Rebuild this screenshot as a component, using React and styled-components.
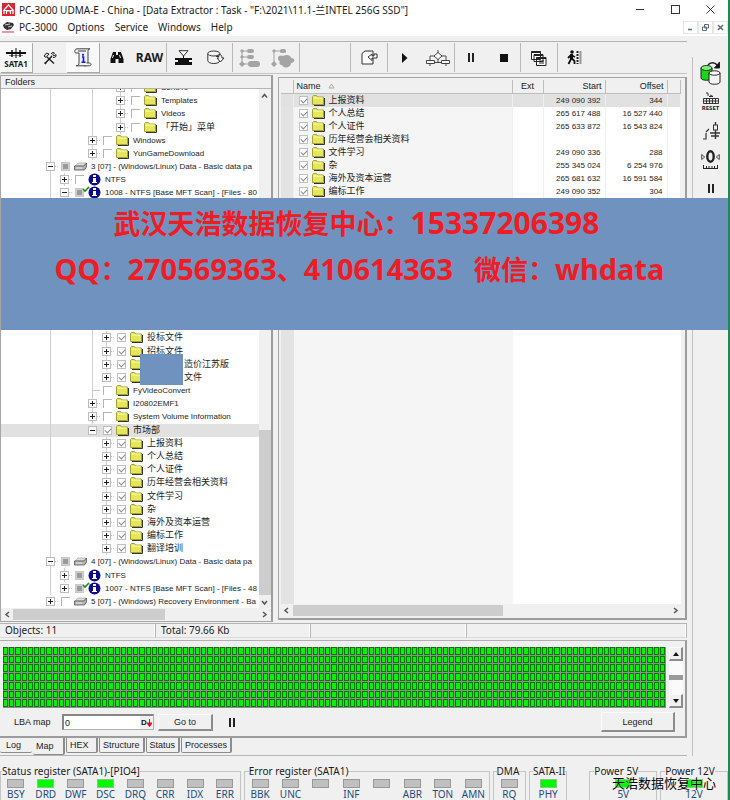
import React from 'react';
import styled, { createGlobalStyle } from 'styled-components';

const GlobalStyle = createGlobalStyle`
  * {
    box-sizing: border-box;
  }

  body {
    margin: 0;
    background: #f0f0f0;
    color: #1c1c1c;
    font-family: "Noto Sans", "Noto Sans CJK SC", sans-serif;
    font-size: 10px;
  }

  button, input {
    font: inherit;
    color: inherit;
    padding: 0;
    margin: 0;
    border: none;
    background: none;
    border-radius: 0;
  }

  ul {
    list-style: none;
    margin: 0;
    padding: 0;
  }
`

const compactFont = '"Liberation Sans", "Noto Sans CJK SC", sans-serif';

const Shell = styled.div`
  position: relative;
  border-right: 2px solid #1f8a50;
  background: #f0f0f0;
  overflow: hidden;
`

const TitleBar = styled.header`
  display: flex;
  align-items: center;
  height: 18px;
  padding-left: 2px;
  gap: 4px;
  background: #fff;
`

const TitleText = styled.h1`
  flex: 1;
  margin: 0;
  font-size: 10px;
  font-weight: 400;
  white-space: nowrap;
`

const WindowButtons = styled.div`
  display: flex;
`

const WindowButton = styled.button`
  display: flex;
  align-items: center;
  justify-content: center;
  width: 35px;
  height: 16px;
`

const MenuBar = styled.nav`
  display: flex;
  align-items: center;
  height: 18px;
  padding-left: 2px;
  background: #fff;
`

const MenuList = styled.ul`
  display: flex;
  flex: 1;
  gap: 10px;
  margin-left: 4px;
`

const ChildButton = styled.button`
  display: flex;
  align-items: center;
  justify-content: center;
  width: 15px;
  height: 13px;
  border: 1px solid #e6e6e6;
`

const Body = styled.div`
  display: flex;
`

const Main = styled.main`
  flex: 1;
  min-width: 0;
  padding-top: 5px;
`

const Toolbar = styled.div`
  display: flex;
  height: 33px;
  border-top: 1px solid #b4b4b4;
  border-bottom: 1px solid #c4c4c4;
`

const ToolGroup = styled.div`
  display: flex;
  width: ${props => props.$width}px;
  margin: 1px 0;
  border-right: 1px solid #b8b8b8;

  &:last-child {
    border-right: none;
  }
`

const ToolButton = styled.button`
  display: flex;
  flex: 1;
  flex-direction: column;
  align-items: center;
  justify-content: center;
  background: ${props => props.$raised ? '#f9f9f9' : 'none'};
  box-shadow: ${props => props.$raised ? '1px 1px 0 #a8a8a8' : 'none'};
  font-size: ${props => props.$small ? '8px' : '12px'};
  line-height: 9px;
  font-weight: 700;
`

const Panels = styled.div`
  display: flex;
  gap: 5px;
  padding-top: 1px;
`

const FolderPanel = styled.section`
  display: flex;
  flex-direction: column;
  flex: 274 1 0;
  min-width: 0;
  border: 1px solid #a6a6a6;
  border-right: 2px solid #9c9c9c;
`

const PanelTitle = styled.h2`
  margin: 0;
  height: 13px;
  padding-left: 4px;
  border-bottom: 1px solid #b4b4b4;
  font-family: ${compactFont};
  font-size: 9px;
  font-weight: 400;
  line-height: 13px;
`

const TreeArea = styled.div`
  display: flex;
  height: 519px;
`

const TreeView = styled.div`
  position: relative;
  flex: 1;
  min-width: 0;
  overflow: hidden;
  background: #fff;
`

const TreeList = styled.ul`
  display: grid;
  grid-template-rows: repeat(40, 1fr);
  height: 527px;
  margin-top: -8px;
`

const TreeItem = styled.li`
  display: flex;
  align-items: center;
  grid-row: span ${props => props.$span || 1};
  padding-left: ${props => 45 + props.$level * 14}px;
  background-color: ${props => props.$selected ? '#e1e1e1' : 'transparent'};
  background-image: ${props => props.$guides.map(() => 'linear-gradient(#cfcfcf, #cfcfcf)').join(', ')};
  background-position: ${props => props.$guides.map(level => `${49 + level * 14}px 0`).join(', ')};
  background-size: 1px 100%;
  background-repeat: no-repeat;
`

const Expander = styled.button`
  display: flex;
  flex: none;
  width: 15px;
  height: 9px;
`

const ItemLabel = styled.label`
  display: flex;
  align-items: center;
  min-width: 0;
  font-family: ${compactFont};
  font-size: ${props => props.$cjk ? '9px' : '8px'};
  line-height: 13px;
  white-space: nowrap;
`

const ItemText = styled.span`
  padding-left: ${props => props.$covered ? '41px' : '4px'};
`

const Check = styled.input`
  appearance: none;
  flex: none;
  width: 9px;
  height: 9px;
  margin-right: 4px;
  border: solid #b4b4b4;
  border-width: 1px 0 0 1px;
  background: #fff;

  &:checked {
    border-width: 1px;
    border-color: #c0c0c0;
  }

  &:checked::after {
    content: '';
    display: block;
    width: 5px;
    height: 3px;
    margin: 1px;
    border: solid #8c8c8c;
    border-width: 0 0 1px 1px;
    transform: rotate(-45deg);
  }

  &[data-partial='true'] {
    border: 1px solid #c8c8c8;
    background: #9a9a9a;
    box-shadow: inset 0 0 0 1px #d0d0d0;
  }
`

const Redaction = styled.div`
  position: absolute;
  left: 139px;
  top: 265px;
  width: 43px;
  height: 31px;
  background: #6f92bf;
`

const VScroll = styled.div`
  display: flex;
  flex-direction: column;
  align-items: center;
  justify-content: space-between;
  width: 12px;
  background: #f0f0f0;
`

const VTrack = styled.div`
  flex: 1;
  width: 100%;
  padding-top: 329px;
`

const VThumb = styled.div`
  height: 165px;
  background: #cdcdcd;
`

const HScroll = styled.div`
  display: flex;
  align-items: center;
  height: 13px;
  background: #f0f0f0;
`

const HTrack = styled.div`
  flex: 1;
  height: 11px;
`

const HThumb = styled.div`
  width: ${props => props.$size}%;
  height: 11px;
  background: #cdcdcd;
`

const ScrollButton = styled.button`
  display: flex;
  align-items: center;
  justify-content: center;
  width: 12px;
  height: 12px;
`

const ListPanel = styled.section`
  display: flex;
  flex-direction: column;
  flex: 407 1 0;
  min-width: 0;
  margin: 2px 0;
  padding: 2px 4px 1px 2px;
  border: 1px solid #a6a6a6;
  border-right: 2px solid #9c9c9c;
  border-bottom: 2px solid #9c9c9c;
`

const TableArea = styled.div`
  flex: 1;
  background: linear-gradient(to right, #e3e3e3 13px, #f5f5f5 13px, #f5f5f5 232px, #fff 232px);
`

const FileTable = styled.table`
  width: 100%;
  table-layout: fixed;
  border-spacing: 0;
  font-family: ${compactFont};
  font-size: 8px;
`

const HeadCell = styled.th`
  height: 14px;
  width: ${props => props.$width ? `${props.$width}px` : 'auto'};
  padding: 0 3px;
  border-right: 1px solid #bdbdbd;
  border-bottom: 1px solid #bdbdbd;
  background: #f0f0f0;
  font-size: 9px;
  font-weight: 400;
  line-height: 13px;
  text-align: ${props => props.$align || 'left'};
`

const FileRow = styled.tr`
  background: ${props => props.$selected ? '#e1e1e1' : 'none'};
`

const Cell = styled.td`
  height: 13px;
  padding: 0 4px 0 0;
  border-right: 1px solid #efefef;
  line-height: 13px;
  text-align: right;
  white-space: nowrap;
`

const NameCell = styled(Cell)`
  padding: 0 5px;
  text-align: left;
`

const StatusBar = styled.div`
  display: grid;
  grid-template-columns: 156px 155px 156px 1fr;
  height: 15px;
  margin-top: 1px;
`

const StatusCell = styled.div`
  padding-left: 5px;
  border-top: 1px solid #b4b4b4;
  border-right: 1px solid #b4b4b4;
  border-bottom: 1px solid #dadada;
  box-shadow: inset -1px 0 0 #fff;
  line-height: 13px;
`

const MapPanel = styled.section`
  margin-top: 2px;
  padding: 6px 2px 4px 3px;
  border-top: 1px solid #b0b0b0;
  border-right: 2px solid #9c9c9c;
  border-bottom: 2px solid #9c9c9c;
`

const MapArea = styled.div`
  display: flex;
  gap: 3px;
  height: 61px;
`

const SectorMap = styled.div`
  display: grid;
  flex: 1;
  grid-template-columns: repeat(107, 1fr);
  grid-template-rows: repeat(7, 1fr);
  background: #8b908b;
`

const Sector = styled.i`
  margin: 0 1px 1px 0;
  border: 1px solid #0c780c;
  background: #00f500;
`

const MapScroll = styled.div`
  display: flex;
  flex-direction: column;
  align-items: center;
  justify-content: space-between;
  width: 14px;
  background: #fafafa;
`

const RaisedButton = styled.button`
  display: flex;
  align-items: center;
  justify-content: center;
  width: ${props => props.$width}px;
  height: ${props => props.$height}px;
  border: solid #fafafa;
  border-width: 1px 2px 2px 1px;
  border-right-color: #8c8c8c;
  border-bottom-color: #8c8c8c;
  background: #f0f0f0;
  font-family: ${compactFont};
  font-size: 9px;
`

const MapThumb = styled.div`
  width: 100%;
  height: 5px;
  background: #9a9a9a;
`

const MapControls = styled.div`
  display: flex;
  align-items: center;
  height: 20px;
  margin-top: 4px;
  padding: 0 8px 0 11px;
  font-family: ${compactFont};
  font-size: 9px;
`

const LbaLabel = styled.label`
  width: 48px;
`

const LbaBox = styled.div`
  display: flex;
  width: 92px;
  height: 16px;
  margin-right: 4px;
  border: 1px solid #b0b0b0;
  border-top: 2px solid #858585;
  border-left: 2px solid #858585;
  background: #fff;
`

const LbaInput = styled.input`
  flex: 1;
  min-width: 0;
  padding-left: 1px;
`

const RadixButton = styled.button`
  display: flex;
  align-items: center;
  justify-content: center;
  width: 13px;
  background: #f0f0f0;
  color: #111;
  font-size: 8px;
  font-weight: 700;
  line-height: 12px;
`

const PauseButton = styled.button`
  flex: 1;
  display: flex;
  padding-left: 15px;
`

const Tabs = styled.div`
  display: flex;
  gap: 1px;
  height: 18px;
  border-bottom: 1px solid #b4b4b4;
`

const Tab = styled.button`
  height: ${props => props.$active ? '17px' : '15px'};
  min-width: 32px;
  padding: 0 3px;
  border: solid #8c8c8c;
  border-width: 0 ${props => props.$flat ? 0 : 2}px 1px ${props => props.$flat || props.$active ? 0 : 1}px;
  border-radius: 0 0 2px 2px;
  font-family: ${compactFont};
  font-size: 9px;
  text-align: left;
`

const FlatTab = styled(Tab)`
  padding-left: 6px;
`

const Rail = styled.aside`
  display: flex;
  flex-direction: column;
  align-items: center;
  width: 36px;
  margin: 21px 0 0 5px;
  padding-top: 1px;
  border-left: 1px solid #c0c0c0;
`

const RailButton = styled.button`
  display: flex;
  flex-direction: column;
  align-items: center;
  justify-content: center;
  width: 30px;
  height: 29px;
  font-size: 6px;
  font-weight: 700;
  line-height: 6px;
`

const Footer = styled.footer`
  display: flex;
  gap: 3px;
  height: 35px;
  margin-top: 9px;
`

const Register = styled.fieldset`
  flex: ${props => props.$grow} 1 0;
  min-width: 0;
  margin: 0 0 0 ${props => props.$apart ? '19px' : '0'};
  padding: 0;
  border: 1px solid #c4c4c4;
  border-bottom: none;
`

const RegisterName = styled.legend`
  margin-left: ${props => props.$inset || 1}px;
  padding: 0;
  font-size: 10px;
  line-height: 12px;
  white-space: nowrap;
`

const Leds = styled.div`
  display: grid;
  grid-template-columns: repeat(${props => props.$count}, 1fr);
`

const LedItem = styled.div`
  display: flex;
  flex-direction: column;
  align-items: center;
  padding-top: 2px;
  color: #1d4b80;
  line-height: 12px;
`

const Led = styled.span`
  width: 17px;
  height: 9px;
  border: 1px solid ${props => props.$on ? '#7fce7f' : '#989898'};
  background: ${props => props.$on ? '#00f800' : '#c0c0c0'};
`

const Banner = styled.div`
  position: absolute;
  top: 198px;
  left: 1px;
  right: 0;
  height: 132px;
  padding: 2px 16px 0 0;
  background: #6f92bf;
  color: #ee1c25;
  font-size: 27px;
  font-weight: 700;
  line-height: 45px;
  text-align: center;
  white-space: pre;
`

const BannerLine = styled.p`
  margin: 0;
  padding-left: ${props => props.$shift || 0}px;

  b {
    font-size: ${props => props.$latin}px;
    font-weight: 700;
  }
`

const Watermark = styled.div`
  position: absolute;
  right: 12px;
  bottom: 7px;
  color: #000;
  font-family: "Noto Sans CJK SC", sans-serif;
  font-size: 13px;
  line-height: 20px;
  text-shadow: 0 0 1px #fff;
`

const Icon = styled.svg`
  flex: none;
  overflow: visible;
`

const FolderIcon = () => (
  <Icon width="13" height="11" viewBox="0 0 13 11">
    <path d="M2 10.5h10.5V3" fill="none" stroke="#333" />
    <path d="M.5 9.5v-8l1-1h3l1 1.5h6v7.5z" fill="#e6e65a" stroke="#a3a33a" />
    <path d="M1.5 3h9" stroke="#ffffb0" />
  </Icon>
)

const DriveIcon = () => (
  <Icon width="13" height="9" viewBox="0 0 13 9">
    <path d="M1 4l3-3h8L10 4z" fill="#e0e0e0" stroke="#999" strokeWidth=".6" />
    <path d="M.5 4h9.5l2.5-3v4l-2 3H.5z" fill="#b5b5b5" stroke="#555" strokeWidth=".8" />
    <path d="M2 6h6" stroke="#eee" />
  </Icon>
)

const InfoIcon = ({ ticked }) => (
  <Icon width="13" height="13" viewBox="0 0 13 13">
    <circle cx="6.5" cy="6.5" r="6" fill="#0b0b8c" />
    <path d="M5 5h3v4h1v1H4V9h1V6z" fill="#fff" />
    <path d="M5 2h3v2H5z" fill="#fff" />
    {ticked && <path d="M-5 3l2 2 4-4" stroke="#1c8a1c" strokeWidth="1.6" fill="none" />}
  </Icon>
)

const ExpandIcon = ({ open }) => (
  <Icon width="15" height="9" viewBox="0 0 15 9">
    <rect x=".5" y=".5" width="8" height="8" fill="#fff" stroke="#bcbcbc" />
    <path d={open ? 'M2 4.5h5' : 'M2 4.5h5M4.5 2v5'} stroke="#222" />
    <path d="M9 4.5h4" stroke="#c4c4c4" strokeDasharray="1 1" />
  </Icon>
)

const LeafIcon = () => (
  <Icon width="15" height="9" viewBox="0 0 15 9">
    <path d="M4 4.5h8" stroke="#c4c4c4" />
  </Icon>
)

const chevrons = {
  up: 'M1 5.5l2.5-3 2.5 3',
  down: 'M1 2l2.5 3L6 2',
  left: 'M5 1L2 3.5 5 6',
  right: 'M2 1l3 2.5L2 6'
}

const Chevron = ({ dir }) => (
  <svg width="7" height="7" viewBox="0 0 7 7">
    <path d={chevrons[dir]} fill="none" stroke="#555" strokeWidth="1.5" />
  </svg>
)

const Triangle = ({ up }) => (
  <svg width="6" height="4" viewBox="0 0 6 4">
    <path d={up ? 'M0 4l3-4 3 4z' : 'M0 0l3 4 3-4z'} fill="#111" />
  </svg>
)

const PauseIcon = () => (
  <svg width="8" height="9" viewBox="0 0 8 9">
    <path d="M2 0v9M6 0v9" stroke="#222" strokeWidth="2" />
  </svg>
)

const SataIcon = () => (
  <svg width="20" height="11" viewBox="0 0 20 11">
    <path d="M0 5h20" stroke="#111" strokeWidth="2" />
    <path d="M3 7.5h14" stroke="#888" />
    <path d="M6 2v7M14 2v7" stroke="#111" strokeWidth="1.5" />
    <path d="M10 0v10" stroke="#111" />
  </svg>
)

const ToolsIcon = () => (
  <svg width="14" height="14" viewBox="0 0 14 14" fill="none" stroke="#222">
    <path d="M2 12.5L10 4M1.5 11.5l1.5 1.5" strokeWidth="1.6" />
    <path d="M4 6l7 6.5" strokeWidth="1.4" />
    <path d="M1 5l2.5-3L6 3 3 6.5zM8 3c1-2 3-1.5 3.5-1L10 3.5 11 5l2-1.5c.5 2-1 3.5-3 3" fill="#ddd" />
  </svg>
)

const ScrollIcon = () => (
  <svg width="18" height="19" viewBox="0 0 18 19">
    <path d="M3 .8h13c-2 0-2 2-2 3v11c0 2-1 3-2.5 3H2c2 0 3-1 3-3V5H2C0 5 .5 1 3 .8z" fill="#eef0f8" stroke="#444" />
    <path d="M10 17.8h5.5c2 0 2-2.8 0-2.8h-3" fill="#fff" stroke="#444" />
    <path d="M4 3h8" stroke="#777" strokeWidth="1.5" />
    <path d="M8 9h1.5v5M7.5 14.2h4" stroke="#1414e0" strokeWidth="1.6" fill="none" />
    <circle cx="9" cy="6.8" r="1.1" fill="#1414e0" />
  </svg>
)

const BinocularsIcon = () => (
  <svg width="14" height="13" viewBox="0 0 14 13">
    <path d="M3 1h3v3h2V1h3l2.5 7v4H8.5V8h-3v4H.5V8z" fill="#111" />
    <path d="M3.5 4l-1 3M9.5 4l1 3" stroke="#eee" />
  </svg>
)

const ValveIcon = () => (
  <svg width="19" height="16" viewBox="0 0 19 16">
    <path d="M5 .7h9L9.5 6z" fill="#fff" stroke="#333" />
    <path d="M9.5 6v4" stroke="#111" />
    <path d="M1 8h17v2h-3v2h3v3H1v-3h3v-2H1z" fill="#111" />
  </svg>
)

const DiskArrowIcon = () => (
  <svg width="18" height="15" viewBox="0 0 18 15" fill="#f4f4f4" stroke="#333">
    <path d="M.8 3.5v7c0 4 12 4 12 0v-7" />
    <ellipse cx="6.8" cy="3.5" rx="6" ry="2.5" />
    <path d="M9 6.5h3v-2c2 0 3 1 3 3.5h2l-3.5 4L10 8h2" />
  </svg>
)

const TreeBlocksIcon = () => (
  <svg width="21" height="20" viewBox="0 0 21 20" fill="#a4a4a4">
    <path d="M3 2v15M3 3h5M3 9h5M3 16h7" stroke="#a4a4a4" fill="none" />
    <path d="M3 1l2 2-2 2-2-2zM3 7l2 2-2 2-2-2zM3 13l3 3-3 3-3-3z" />
    <rect x="8" y="1" width="7" height="4" rx="2" />
    <rect x="8" y="7" width="7" height="4" rx="2" />
    <rect x="9" y="13" width="12" height="6" rx="3" />
  </svg>
)

const TreeCloudIcon = () => (
  <svg width="24" height="20" viewBox="0 0 24 20" fill="#a4a4a4">
    <path d="M3 2v15M3 3h7" stroke="#a4a4a4" fill="none" />
    <path d="M3 1l2 2-2 2-2-2zM3 13l3 3-3 3-3-3z" />
    <rect x="9" y="1" width="6" height="4" rx="1.5" />
    <path d="M7 10c0-3 4-3 5-2 3-2 8-1 8 2 5 0 4 5 0 5 0 5-8 6-9 2-3 0-3-3-2-4-2 0-2-2-2-3z" />
  </svg>
)

const PageArrowIcon = () => (
  <svg width="17" height="15" viewBox="0 0 17 15" fill="#fafafa" stroke="#333">
    <path d="M1 3.5L4 1h8v13H1z" />
    <path d="M16 4v4h-5v2.5L7 7l4-3v2h2V4z" />
  </svg>
)

const PlayIcon = () => (
  <svg width="6" height="10" viewBox="0 0 6 10">
    <path d="M0 0l5.5 5L0 10z" fill="#111" />
  </svg>
)

const FlowIcon = () => (
  <svg width="24" height="16" viewBox="0 0 24 16" fill="#fafafa" stroke="#444">
    <path d="M12 0v3M8 6H4v4M16 6h4v4M12 9v4" />
    <path d="M12 2.5L16 6l-4 3.5L8 6z" />
    <path d="M.5 10.5h8v3h-8zM15.5 10.5h8v3h-8zM4 14v2M20 14v2M9 12.5h6" />
  </svg>
)

const StopIcon = () => (
  <svg width="8" height="8" viewBox="0 0 8 8">
    <rect width="8" height="8" fill="#111" />
  </svg>
)

const WindowsIcon = () => (
  <svg width="16" height="16" viewBox="0 0 16 16" fill="#fff" stroke="#222">
    <path d="M.5 1.5h9v8h-9zM3 4.5h9v7H3zM5.5 7.5H15v8H5.5z" />
    <path d="M.5 2h9M3 5h9M5.5 8.2H15" strokeWidth="1.8" />
    <path d="M8 11h5M8 13h5" />
  </svg>
)

const ExitIcon = () => (
  <svg width="15" height="15" viewBox="0 0 15 15">
    <circle cx="5" cy="2" r="1.8" fill="#111" />
    <path d="M4.5 4v5" stroke="#111" strokeWidth="3" />
    <path d="M4.5 8l-3 6M4.5 8l3 3v3M1 8l3-3 4 2" stroke="#111" strokeWidth="1.8" fill="none" />
    <path d="M10.5 1v13" stroke="#222" strokeWidth="2" strokeDasharray="2 1" />
    <path d="M13.5 1v13" stroke="#999" strokeWidth="2" />
  </svg>
)

const CylindersIcon = () => (
  <svg width="21" height="24" viewBox="0 0 21 24" stroke="#222">
    <path d="M1 7v10c0 3 11 3 11 0V7" fill="#18d818" />
    <ellipse cx="6.5" cy="7" rx="5.5" ry="2.5" fill="#7af27a" />
    <path d="M9 12v9c0 3 11 3 11 0v-9" fill="#f4f4f4" />
    <ellipse cx="14.5" cy="12" rx="5.5" ry="2.2" fill="#fff" />
    <path d="M8 4c2-3 7-3 9 0" fill="none" strokeWidth="1.4" />
    <path d="M19.5 1v6h-5z" fill="#111" />
  </svg>
)

const ChipIcon = () => (
  <svg width="16" height="13" viewBox="0 0 16 13" fill="none" stroke="#333">
    <path d="M3 1h2v3M7 3l3 1.5H6" />
    <path d="M.5 6.5h15v5H.5zM.5 9h15M3.5 6v6M6.5 6v6M9.5 6v6M12.5 6v6" />
  </svg>
)

const SwitchIcon = () => (
  <svg width="18" height="18" viewBox="0 0 18 18" fill="none" stroke="#333">
    <path d="M1 17h3v-6M4 10l3-3" strokeWidth="1.2" />
    <path d="M13.5 0v3M13.5 8v9M8 11h10M9 14h8" strokeWidth="1.4" />
    <rect x="11.5" y="3" width="4" height="5" />
  </svg>
)

const ZeroIcon = () => (
  <svg width="19" height="20" viewBox="0 0 19 20" fill="none" stroke="#222">
    <ellipse cx="9.5" cy="6.5" rx="3.2" ry="5.2" strokeWidth="2.4" />
    <path d="M.7 4.5l3 2.5-3 2.5zM18.3 4.5l-3 2.5 3 2.5z" strokeWidth=".8" />
    <path d="M2 18.5h15M2.5 18v-3M5.5 18v-2M8 18v-2M11 18v-2M13.5 18v-2M16.5 18v-3" />
  </svg>
)

const AppIcon = () => (
  <svg width="13" height="13" viewBox="0 0 13 13">
    <rect width="13" height="13" fill="#dc2430" />
    <path d="M2 11V7l4.5-5L11 7v4M4.5 11V8h4v3M1 7.5h11" stroke="#fff" strokeWidth="1.2" fill="none" />
  </svg>
)

const MenuIcon = () => (
  <svg width="13" height="12" viewBox="0 0 13 12">
    <path d="M1 4l4-3 6 1 1 2-3 4-4 1-3-2z" fill="#333" />
    <path d="M3 4l5-1M6 6l4-1" stroke="#ccc" />
    <path d="M0 11h12" stroke="#e03040" />
  </svg>
)

const RadixArrow = () => (
  <svg width="5" height="8" viewBox="0 0 5 8">
    <path d="M2.5 0v7M0 4h5L2.5 7.5z" fill="#e01010" stroke="#e01010" />
  </svg>
)

const toolGroups = [
  { width: 33, tools: [{ name: 'SATA1', icon: <SataIcon />, text: 'SATA1', raised: true, small: true }] },
  { width: 67, tools: [{ name: 'Utilities', icon: <ToolsIcon /> }, { name: 'Task info', icon: <ScrollIcon />, raised: true }] },
  { width: 67, tools: [{ name: 'Find', icon: <BinocularsIcon /> }, { name: 'Raw', text: 'RAW' }] },
  { width: 66, tools: [{ name: 'Filter', icon: <ValveIcon /> }, { name: 'Save disk', icon: <DiskArrowIcon /> }] },
  { width: 67, tools: [{ name: 'Tree', icon: <TreeBlocksIcon /> }, { name: 'Group', icon: <TreeCloudIcon /> }] },
  { width: 51, tools: [] },
  { width: 37, tools: [{ name: 'Export', icon: <PageArrowIcon /> }] },
  { width: 67, tools: [{ name: 'Start', icon: <PlayIcon /> }, { name: 'Flow', icon: <FlowIcon /> }] },
  { width: 66, tools: [{ name: 'Pause', icon: <PauseIcon /> }, { name: 'Stop', icon: <StopIcon /> }] },
  { width: 37, tools: [{ name: 'Cascade', icon: <WindowsIcon /> }] },
  { width: 33, tools: [{ name: 'Exit', icon: <ExitIcon /> }] }
]

const deep = [0, 3, 5];
const partition = '[Base MFT Scan] - [Files - '

const treeItems = [
  { text: 'SendTo', level: 5, guides: deep },
  { text: 'Templates', level: 5, guides: deep },
  { text: 'Videos', level: 5, guides: deep },
  { text: '「开始」菜单', level: 5, guides: deep, cjk: true },
  { text: 'Windows', level: 3, guides: [0, 3] },
  { text: 'YunGameDownload', level: 3, guides: [0, 3] },
  { text: '3 [07] - (Windows/Linux) Data - Basic data pa', level: 0, guides: [0], kind: 'drive', open: true, partial: true },
  { text: 'NTFS', level: 1, guides: [0, 1], kind: 'info' },
  { text: `1008 - NTFS ${partition}80`, level: 1, guides: [0], kind: 'ticked', open: true, partial: true },
  { span: 10, level: 0, guides: [0, 3] },
  { text: '投标文件', level: 4, guides: [0, 3, 4], checked: true, cjk: true },
  { text: '招标文件', level: 4, guides: [0, 3, 4], checked: true, cjk: true },
  { text: '造价江苏版', level: 4, guides: [0, 3, 4], checked: true, cjk: true, covered: true },
  { text: '文件', level: 4, guides: [0, 3], checked: true, cjk: true, covered: true },
  { text: 'FyVideoConvert', level: 3, guides: [0, 3], leaf: true },
  { text: 'I20802EMF1', level: 3, guides: [0, 3] },
  { text: 'System Volume Information', level: 3, guides: [0, 3] },
  { text: '市场部', level: 3, guides: [0], checked: true, cjk: true, open: true, selected: true },
  ...['上报资料', '个人总结', '个人证件', '历年经营会相关资料', '文件学习', '杂', '海外及资本运营', '编标工作', '翻译培训']
    .map(text => ({ text, level: 4, guides: [0, 4], checked: true, cjk: true })),
  { text: '4 [07] - (Windows/Linux) Data - Basic data pa', level: 0, guides: [0], kind: 'drive', open: true, partial: true },
  { text: 'NTFS', level: 1, guides: [0, 1], kind: 'info', partial: true },
  { text: `1007 - NTFS ${partition}48`, level: 1, guides: [0], kind: 'ticked', partial: true },
  { text: '5 [07] - (Windows) Recovery Environment - Ba', level: 0, guides: [], kind: 'drive' }
]

const files = [
  ['上报资料', '249 090 392', '344'],
  ['个人总结', '265 617 488', '16 527 440'],
  ['个人证件', '265 633 872', '16 543 824'],
  ['历年经营会相关资料', '', ''],
  ['文件学习', '249 090 336', '288'],
  ['杂', '255 345 024', '6 254 976'],
  ['海外及资本运营', '265 681 632', '16 591 584'],
  ['编标工作', '249 090 352', '304']
]

const registers = [
  { name: 'Status register (SATA1)-[PIO4]', grow: 243, bits: ['BSY', 'DRD', 'DWF', 'DSC', 'DRQ', 'CRR', 'IDX', 'ERR'], on: [1, 3] },
  { name: 'Error register (SATA1)', grow: 248, bits: ['BBK', 'UNC', '', 'INF', '', 'ABR', 'TON', 'AMN'], on: [], inset: 4 },
  { name: 'DMA', grow: 32, bits: ['RQ'], on: [], inset: 3 },
  { name: 'SATA-II', grow: 37, bits: ['PHY'], on: [0], inset: 3 },
  { name: 'Power 5V', grow: 67, bits: ['5V'], on: [0], inset: 4, apart: true },
  { name: 'Power 12V', grow: 67, bits: ['12V'], on: [0], inset: 4 }
]

const itemIcons = {
  drive: <DriveIcon />,
  info: <InfoIcon />,
  ticked: <InfoIcon ticked />
}

const TreeRow = ({ item }) => (
  <TreeItem $level={item.level} $guides={item.guides} $span={item.span} $selected={item.selected}>
    {item.text && (
      <>
        <Expander aria-label="Toggle">{item.leaf ? <LeafIcon /> : <ExpandIcon open={item.open} />}</Expander>
        <ItemLabel $cjk={item.cjk}>
          <Check type="checkbox" defaultChecked={item.checked} data-partial={item.partial} />
          {itemIcons[item.kind] || <FolderIcon />}
          <ItemText $covered={item.covered}>{item.text}</ItemText>
        </ItemLabel>
      </>
    )}
  </TreeItem>
)

const HorizontalScroll = ({ size }) => (
  <HScroll>
    <ScrollButton aria-label="Scroll left"><Chevron dir="left" /></ScrollButton>
    <HTrack><HThumb $size={size} /></HTrack>
    <ScrollButton aria-label="Scroll right"><Chevron dir="right" /></ScrollButton>
  </HScroll>
)

const Folders = () => (
  <FolderPanel>
    <PanelTitle>Folders</PanelTitle>
    <TreeArea>
      <TreeView>
        <TreeList>
          {treeItems.map((item, i) => <TreeRow key={i} item={item} />)}
        </TreeList>
        <Redaction />
      </TreeView>
      <VScroll>
        <ScrollButton aria-label="Scroll up"><Chevron dir="up" /></ScrollButton>
        <VTrack><VThumb /></VTrack>
        <ScrollButton aria-label="Scroll down"><Chevron dir="down" /></ScrollButton>
      </VScroll>
    </TreeArea>
    <HorizontalScroll size={62} />
  </FolderPanel>
)

const FileList = () => (
  <ListPanel>
    <TableArea>
      <FileTable>
        <thead>
          <tr>
            <HeadCell $width={13} />
            <HeadCell $width={219}>
              Name <svg width="20" height="6" viewBox="0 0 20 6"><path d="M6 5l2.5-4L11 5z" fill="none" stroke="#aaa" /></svg>
            </HeadCell>
            <HeadCell $width={31} $align="center">Ext</HeadCell>
            <HeadCell $width={62} $align="right">Start</HeadCell>
            <HeadCell $width={62} $align="right">Offset</HeadCell>
            <HeadCell />
          </tr>
        </thead>
        <tbody>
          {files.map(([name, start, offset], i) => (
            <FileRow key={name} $selected={i === 0}>
              <Cell />
              <NameCell>
                <ItemLabel $cjk>
                  <Check type="checkbox" defaultChecked />
                  <FolderIcon />
                  <ItemText>{name}</ItemText>
                </ItemLabel>
              </NameCell>
              <Cell />
              <Cell>{start}</Cell>
              <Cell>{offset}</Cell>
              <Cell />
            </FileRow>
          ))}
        </tbody>
      </FileTable>
    </TableArea>
    <HorizontalScroll size={56} />
  </ListPanel>
)

const LbaMap = () => (
  <MapPanel>
    <MapArea>
      <SectorMap>
        {Array.from({ length: 749 }, (_, i) => <Sector key={i} />)}
      </SectorMap>
      <MapScroll>
        <RaisedButton $width={14} $height={14} aria-label="Map up"><Triangle up /></RaisedButton>
        <MapThumb />
        <RaisedButton $width={14} $height={14} aria-label="Map down"><Triangle /></RaisedButton>
      </MapScroll>
    </MapArea>
    <MapControls>
      <LbaLabel htmlFor="lba">LBA map</LbaLabel>
      <LbaBox>
        <LbaInput id="lba" type="text" defaultValue="0" />
        <RadixButton>D<RadixArrow /></RadixButton>
      </LbaBox>
      <RaisedButton $width={55} $height={17}>Go to</RaisedButton>
      <PauseButton aria-label="Pause map"><PauseIcon /></PauseButton>
      <RaisedButton $width={74} $height={20}>Legend</RaisedButton>
    </MapControls>
  </MapPanel>
)

const App = () => {
  return (
    <>
      <GlobalStyle />
      <Shell>
        <TitleBar>
          <AppIcon />
          <TitleText>PC-3000 UDMA-E - China - [Data Extractor : Task - "F:\2021\11.1-兰INTEL 256G SSD"]</TitleText>
          <WindowButtons>
            <WindowButton aria-label="Minimize"><svg width="9" height="9"><path d="M0 4.5h8" stroke="#333" /></svg></WindowButton>
            <WindowButton aria-label="Maximize"><svg width="9" height="9"><rect x=".5" y=".5" width="8" height="8" fill="none" stroke="#333" /></svg></WindowButton>
            <WindowButton aria-label="Close"><svg width="9" height="9"><path d="M.5.5l8 8M8.5.5l-8 8" stroke="#333" /></svg></WindowButton>
          </WindowButtons>
        </TitleBar>
        <MenuBar>
          <MenuIcon />
          <MenuList>
            {['PC-3000', 'Options', 'Service', 'Windows', 'Help'].map(name => (
              <li key={name}><button>{name}</button></li>
            ))}
          </MenuList>
          <ChildButton aria-label="Minimize child"><svg width="7" height="7"><path d="M1 5.5h4" stroke="#5a6b80" strokeWidth="1.5" /></svg></ChildButton>
          <ChildButton aria-label="Restore child"><svg width="7" height="7" fill="#fff" stroke="#5a6b80"><path d="M2.5.5h4V4h-4zM.5 3h4v3.5h-4z" /></svg></ChildButton>
          <ChildButton aria-label="Close child"><svg width="7" height="7"><path d="M1 1l5 5M6 1L1 6" stroke="#5a6b80" strokeWidth="1.5" /></svg></ChildButton>
        </MenuBar>
        <Body>
          <Main>
            <Toolbar>
              {toolGroups.map((group, i) => (
                <ToolGroup key={i} $width={group.width}>
                  {group.tools.map(tool => (
                    <ToolButton key={tool.name} aria-label={tool.name} $raised={tool.raised} $small={tool.small}>
                      {tool.icon}
                      {tool.text}
                    </ToolButton>
                  ))}
                </ToolGroup>
              ))}
            </Toolbar>
            <Panels>
              <Folders />
              <FileList />
            </Panels>
            <StatusBar>
              <StatusCell>Objects: 11</StatusCell>
              <StatusCell>Total: 79.66 Kb</StatusCell>
              <StatusCell />
              <StatusCell />
            </StatusBar>
            <LbaMap />
            <Tabs>
              <FlatTab $flat>Log</FlatTab>
              <Tab $active>Map</Tab>
              <Tab>HEX</Tab>
              <Tab>Structure</Tab>
              <Tab>Status</Tab>
              <Tab>Processes</Tab>
            </Tabs>
          </Main>
          <Rail>
            <RailButton aria-label="Copy disk"><CylindersIcon /></RailButton>
            <RailButton aria-label="Reset"><ChipIcon />RESET</RailButton>
            <RailButton aria-label="Power switch"><SwitchIcon /></RailButton>
            <RailButton aria-label="Recalibrate"><ZeroIcon /></RailButton>
            <RailButton aria-label="Pause drive"><PauseIcon /></RailButton>
          </Rail>
        </Body>
        <Footer>
          {registers.map(reg => (
            <Register key={reg.name} $grow={reg.grow} $apart={reg.apart}>
              <RegisterName $inset={reg.inset}>{reg.name}</RegisterName>
              <Leds $count={reg.bits.length}>
                {reg.bits.map((bit, i) => (
                  <LedItem key={i}><Led $on={reg.on.includes(i)} />{bit}</LedItem>
                ))}
              </Leds>
            </Register>
          ))}
        </Footer>
        <Banner>
          <BannerLine $latin={30}>武汉天浩数据恢复中心：<b>15337206398</b></BannerLine>
          <BannerLine $latin={29} $shift={6}><b>QQ</b>：<b>270569363</b>、<b>410614363</b>{'   '}微信：<b>whdata</b></BannerLine>
        </Banner>
        <Watermark>天浩数据恢复中心</Watermark>
      </Shell>
    </>
  )
}

export default App;
